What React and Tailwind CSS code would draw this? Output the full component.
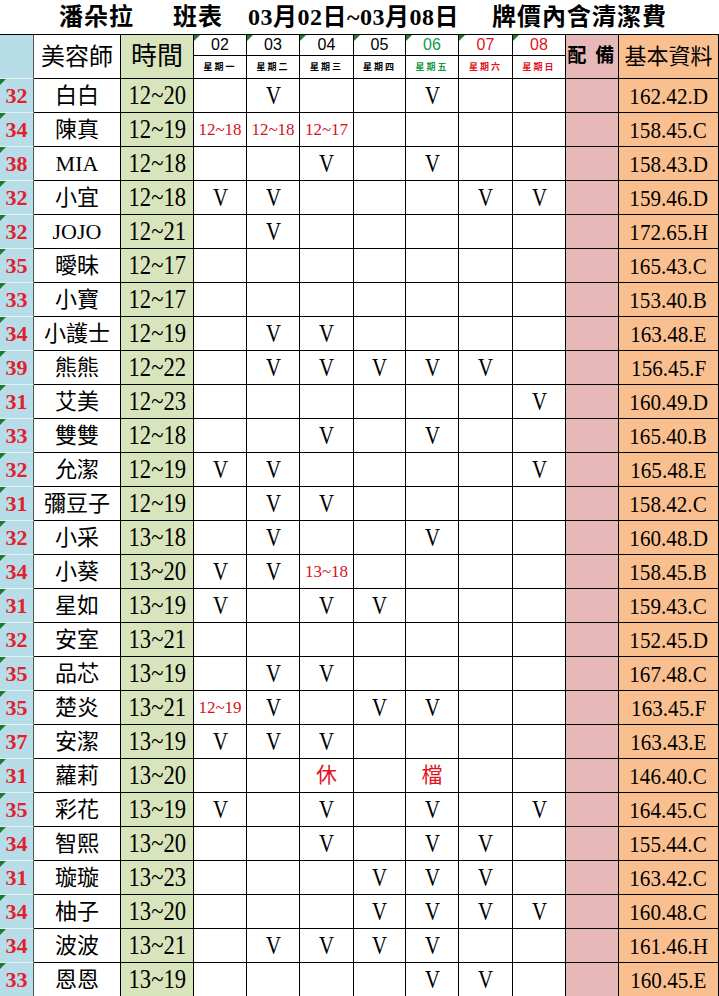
import React from 'react';

const DAYS = [
  { d: '02', w: '星期一', c: 'text-black' },
  { d: '03', w: '星期二', c: 'text-black' },
  { d: '04', w: '星期三', c: 'text-black' },
  { d: '05', w: '星期四', c: 'text-black' },
  { d: '06', w: '星期五', c: 'text-[#119a48]' },
  { d: '07', w: '星期六', c: 'text-[#e3121c]' },
  { d: '08', w: '星期日', c: 'text-[#e3121c]' },
];

// [num, name, time, [02..08], base]
const ROWS = [
  ['32', '白白', '12~20', ['', 'V', '', '', 'V', '', ''], '162.42.D'],
  ['34', '陳真', '12~19', ['12~18', '12~18', '12~17', '', '', '', ''], '158.45.C'],
  ['38', 'MIA', '12~18', ['', '', 'V', '', 'V', '', ''], '158.43.D'],
  ['32', '小宜', '12~18', ['V', 'V', '', '', '', 'V', 'V'], '159.46.D'],
  ['32', 'JOJO', '12~21', ['', 'V', '', '', '', '', ''], '172.65.H'],
  ['35', '曖昧', '12~17', ['', '', '', '', '', '', ''], '165.43.C'],
  ['33', '小寶', '12~17', ['', '', '', '', '', '', ''], '153.40.B'],
  ['34', '小護士', '12~19', ['', 'V', 'V', '', '', '', ''], '163.48.E'],
  ['39', '熊熊', '12~22', ['', 'V', 'V', 'V', 'V', 'V', ''], '156.45.F'],
  ['31', '艾美', '12~23', ['', '', '', '', '', '', 'V'], '160.49.D'],
  ['33', '雙雙', '12~18', ['', '', 'V', '', 'V', '', ''], '165.40.B'],
  ['32', '允潔', '12~19', ['V', 'V', '', '', '', '', 'V'], '165.48.E'],
  ['31', '彌豆子', '12~19', ['', 'V', 'V', '', '', '', ''], '158.42.C'],
  ['32', '小采', '13~18', ['', 'V', '', '', 'V', '', ''], '160.48.D'],
  ['34', '小葵', '13~20', ['V', 'V', '13~18', '', '', '', ''], '158.45.B'],
  ['31', '星如', '13~19', ['V', '', 'V', 'V', '', '', ''], '159.43.C'],
  ['32', '安室', '13~21', ['', '', '', '', '', '', ''], '152.45.D'],
  ['35', '品芯', '13~19', ['', 'V', 'V', '', '', '', ''], '167.48.C'],
  ['35', '楚炎', '13~21', ['12~19', 'V', '', 'V', 'V', '', ''], '163.45.F'],
  ['37', '安潔', '13~19', ['V', 'V', 'V', '', '', '', ''], '163.43.E'],
  ['31', '蘿莉', '13~20', ['', '', '休', '', '檔', '', ''], '146.40.C'],
  ['35', '彩花', '13~19', ['V', '', 'V', '', 'V', '', 'V'], '164.45.C'],
  ['34', '智熙', '13~20', ['', '', 'V', '', 'V', 'V', ''], '155.44.C'],
  ['31', '璇璇', '13~23', ['', '', '', 'V', 'V', 'V', ''], '163.42.C'],
  ['34', '柚子', '13~20', ['', '', '', 'V', 'V', 'V', 'V'], '160.48.C'],
  ['34', '波波', '13~21', ['', 'V', 'V', 'V', 'V', '', ''], '161.46.H'],
  ['33', '恩恩', '13~19', ['', '', '', '', 'V', 'V', ''], '160.45.E'],
];

const Tri = () => (
  <span className="absolute left-0 top-0 w-0 h-0 border-t-[6px] border-r-[6px] border-t-[#1d7a2e] border-r-transparent" />
);

const cell = 'flex items-center justify-center border-r border-b border-black';

function DayValue({ v }) {
  if (!v) return null;
  if (v === 'V') return <span className="inline-block text-[26px] leading-none scale-x-[0.8]">V</span>;
  if (v === '休' || v === '檔') return <span className="text-[21px] leading-none text-[#e3121c]">{v}</span>;
  return <span className="text-[17px] leading-none text-[#d4121c]">{v}</span>;
}

export default function App() {
  return (
    <div className="w-[719px] h-[996px] overflow-hidden bg-white text-black font-['Liberation_Serif','Noto_Sans_CJK_TC',serif]">
      {/* Title */}
      <div className="h-[34px] flex items-center pl-[59px] text-[24px] font-bold leading-none">
        <span className="w-[114px] tracking-[1px]">潘朵拉</span>
        <span className="w-[75px] tracking-[1px]">班表</span>
        <span className="w-[244px] tracking-[0.5px]">03月02日~03月08日</span>
        <span className="tracking-[1px]">牌價內含清潔費</span>
      </div>

      <div className="grid grid-cols-[34px_87px_73px_53px_53px_54px_52px_53px_54px_53px_53px_100px] border-t border-black">
        {/* Header */}
        <div className="row-span-2 bg-[#b7dde8] border-r border-r-[#555] border-b border-b-[#e4f1f5]" />
        <div className={`row-span-2 ${cell} text-[24px]`}>美容師</div>
        <div className={`row-span-2 ${cell} bg-[#d8e4bc] text-[26px]`}>時間</div>
        {DAYS.map((d) => (
          <div key={d.d} className={`relative h-[21px] ${cell} ${d.c} font-['Liberation_Sans',sans-serif] text-[16px] leading-none`}>
            <Tri />
            {d.d}
          </div>
        ))}
        <div className={`row-span-2 ${cell} bg-[#e6b8b7] text-[19px] font-bold tracking-[2px]`}>配 備</div>
        <div className={`row-span-2 ${cell} bg-[#fabf8f] text-[22px]`}>基本資料</div>
        {DAYS.map((d) => (
          <div key={d.w} className={`h-[23px] ${cell} ${d.c} text-[9px] font-bold tracking-[2px] leading-none`}>
            {d.w}
          </div>
        ))}

        {/* Rows */}
        {ROWS.map(([num, name, time, days, base]) => (
          <React.Fragment key={name}>
            <div className="relative h-[34px] flex items-center justify-center bg-[#b7dde8] border-r border-r-[#555] border-b border-b-[#e4f1f5] text-[22px] font-bold text-[#e3202c] leading-none">
              <Tri />
              {num}
            </div>
            <div className={`h-[34px] ${cell} text-[22px] leading-none`}>{name}</div>
            <div className={`h-[34px] ${cell} bg-[#d8e4bc]`}>
              <span className="inline-block text-[27px] leading-none scale-x-[0.84]">{time}</span>
            </div>
            {days.map((v, i) => (
              <div key={i} className={`h-[34px] ${cell}`}>
                <DayValue v={v} />
              </div>
            ))}
            <div className={`h-[34px] ${cell} bg-[#e6b8b7]`} />
            <div className={`h-[34px] ${cell} bg-[#fabf8f]`}>
              <span className="inline-block text-[24px] leading-none scale-x-[0.88]">{base}</span>
            </div>
          </React.Fragment>
        ))}
      </div>
    </div>
  );
}
